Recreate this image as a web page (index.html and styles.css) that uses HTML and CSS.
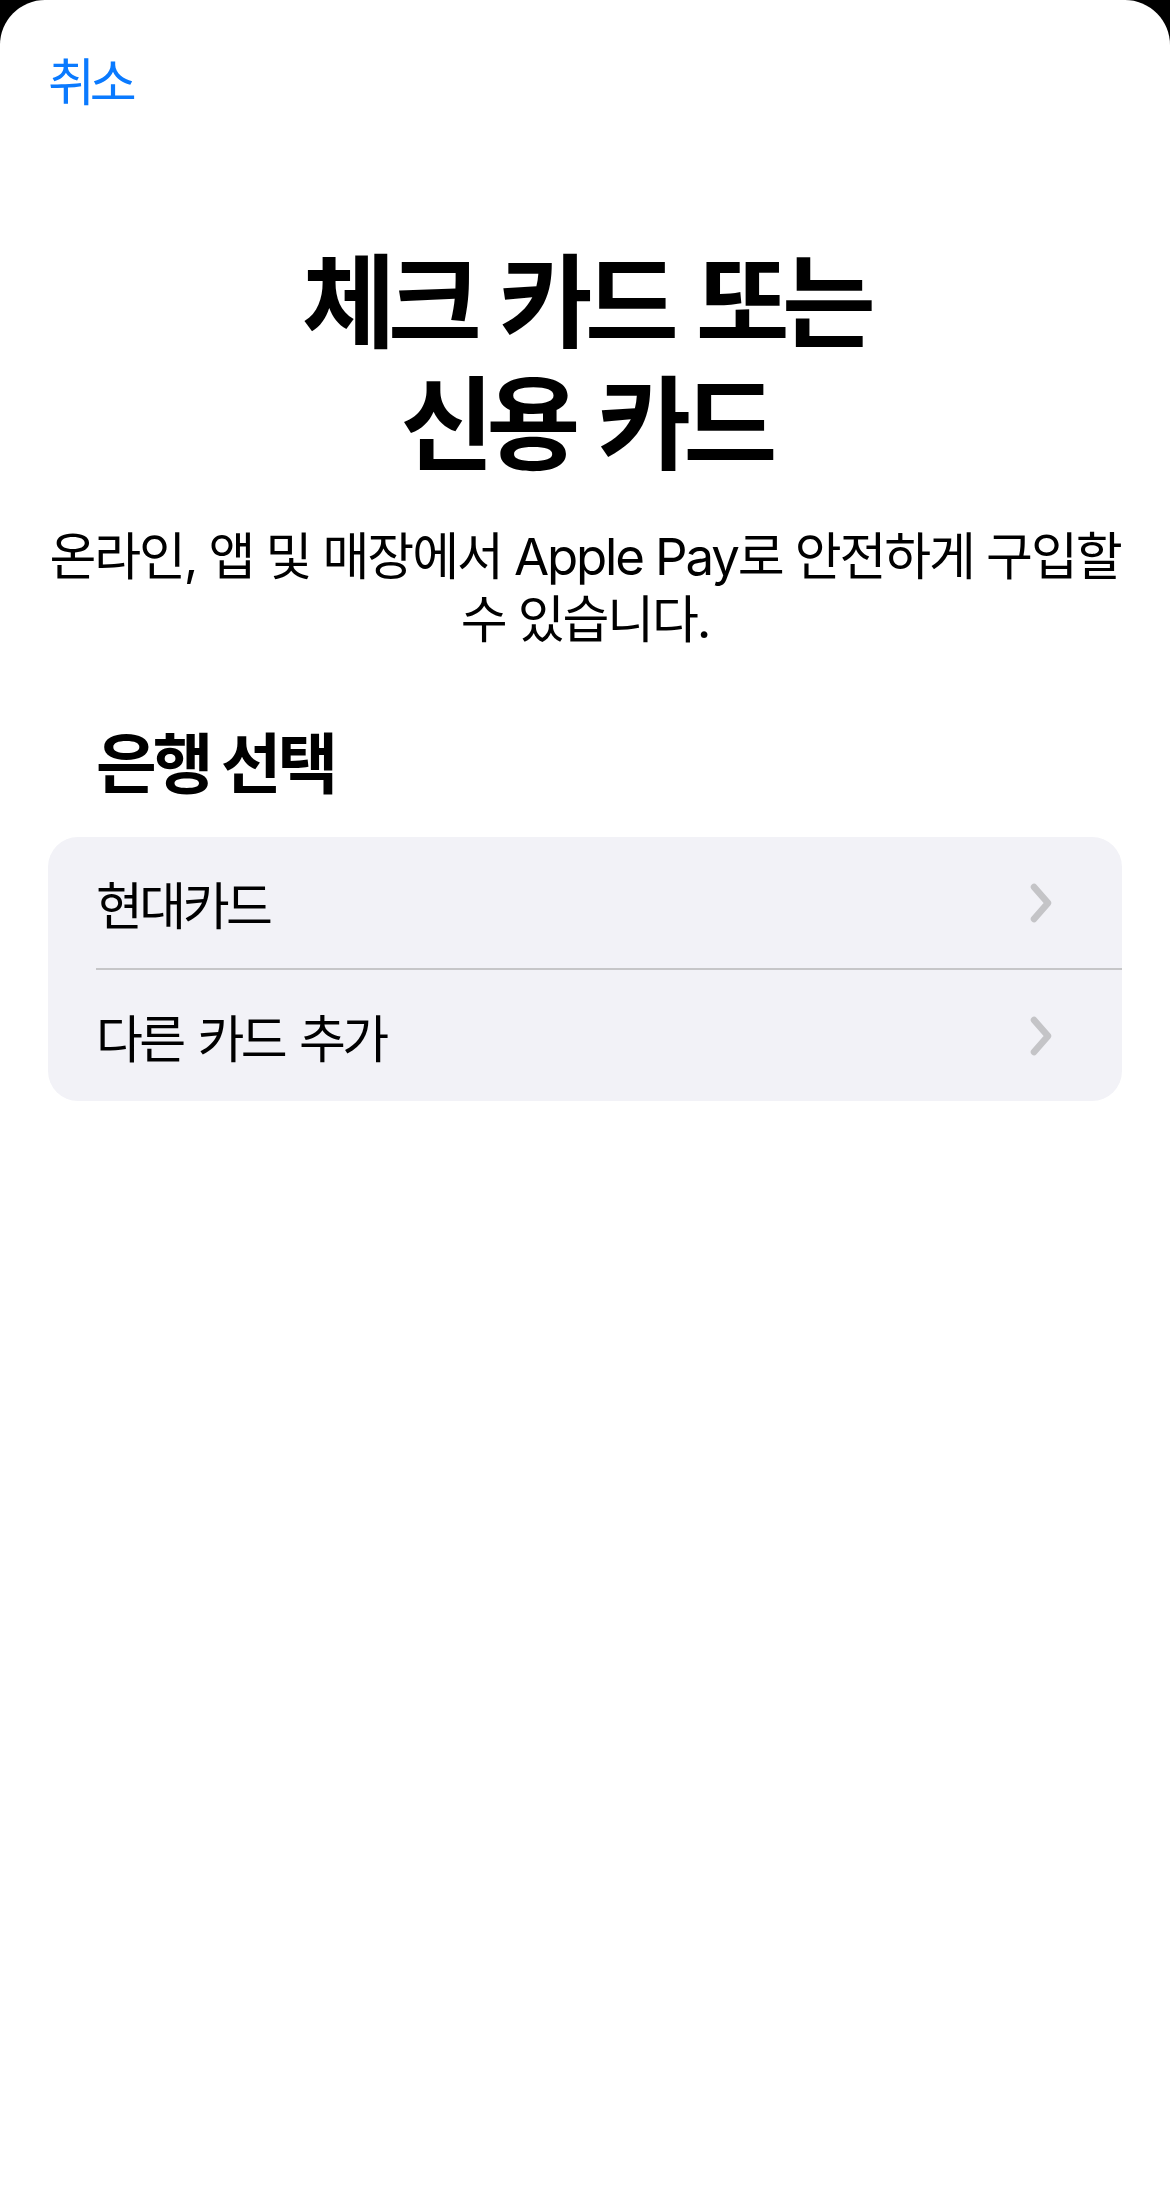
FILE: index.html
```html
<!DOCTYPE html>
<html lang="ko">
<head>
    <meta charset="UTF-8">
    <meta name="viewport" content="width=device-width, initial-scale=1.0">
    <title>체크 카드 또는 신용 카드</title>
    <link rel="stylesheet" href="styles.css">
</head>
<body>
    <div class="sheet">
        <div class="nav">
            <a class="cancel" href="#">취소</a>
        </div>

        <h1 class="title">체크 카드 또는<br>신용 카드</h1>
        <p class="subtitle">온라인, 앱 및 매장에서 Apple Pay로 안전하게 구입할<br>수 있습니다.</p>

        <h2 class="section-header">은행 선택</h2>

        <div class="list">
            <div class="row">
                <span class="row-label">현대카드</span>
                <svg class="chevron" viewBox="0 0 24 40" width="24" height="40">
                    <path d="M5 4 L19 20 L5 36" />
                </svg>
            </div>
            <div class="row">
                <span class="row-label">다른 카드 추가</span>
                <svg class="chevron" viewBox="0 0 24 40" width="24" height="40">
                    <path d="M5 4 L19 20 L5 36" />
                </svg>
            </div>
        </div>
    </div>
</body>
</html>
```

FILE: styles.css
```css
body {
    margin: 0;
    background-color: #000;
    font-family: 'Inter', 'Noto Sans CJK KR', sans-serif;
    color: #000;
}
.sheet {
    background-color: #fff;
    border-radius: 45px 45px 0 0;
    min-height: 2185px;
    overflow: hidden;
}
.nav {
    padding: 52px 48px 0;
    height: 70px;
}
.cancel {
    color: #0a7aff;
    text-decoration: none;
    font-size: 51px;
    line-height: 62px;
    letter-spacing: -0.1em;
}
.title {
    margin: 120px 0 0;
    font-size: 102px;
    font-weight: 700;
    line-height: 122px;
    text-align: center;
    letter-spacing: -0.075em;
    word-spacing: 8px;
}
.subtitle {
    margin: 39px 48px 0;
    font-size: 51px;
    line-height: 63px;
    text-align: center;
    letter-spacing: -0.042em;
}
.section-header {
    margin: 73px 0 0;
    padding-left: 96px;
    font-size: 66px;
    font-weight: 700;
    line-height: 80px;
    letter-spacing: -0.062em;
}
.list {
    margin: 33px 48px 0;
    background-color: #f2f2f7;
    border-radius: 30px;
    overflow: hidden;
}
.row {
    display: flex;
    align-items: center;
    justify-content: space-between;
    height: 131px;
    margin-left: 48px;
    padding-right: 69px;
    border-bottom: 2px solid #c6c6c8;
}
.row:last-child {
    border-bottom: none;
}
.row-label {
    font-size: 51px;
    letter-spacing: -0.07em;
    word-spacing: 4px;
}
.chevron {
    display: block;
}
.chevron path {
    fill: none;
    stroke: #c4c4c7;
    stroke-width: 6.5;
    stroke-linecap: round;
    stroke-linejoin: round;
}
```
